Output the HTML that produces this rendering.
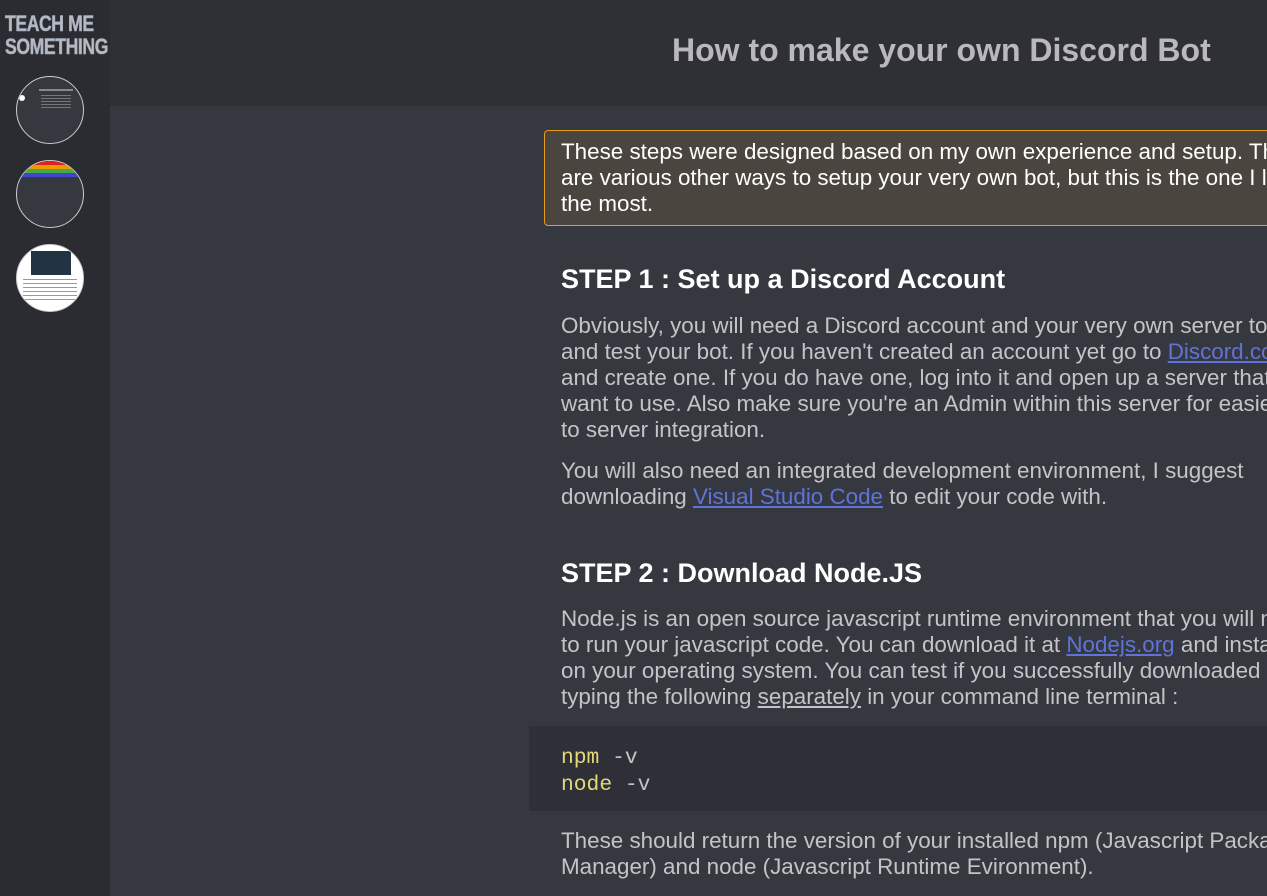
<!DOCTYPE html>
<html><head><meta charset="utf-8"><style>
html,body{margin:0;padding:0;width:1267px;height:896px;overflow:hidden;background:#36383f;font-family:"Liberation Sans",Arial,sans-serif}
.wrap{position:relative;width:1267px;height:896px;overflow:hidden}
.side{position:absolute;left:0;top:0;width:110px;height:896px;background:#2b2c31}
.logo{position:absolute;left:5px;top:12px;font-family:"Liberation Sans",sans-serif;font-weight:900;font-size:22px;line-height:23px;color:#b9b9c0;letter-spacing:-0.5px;transform:scaleX(0.8);transform-origin:left;-webkit-text-stroke:0.6px #9ab;}
.circ{position:absolute;left:16px;width:66px;height:66px;border:1px solid #ccc;border-radius:50%;overflow:hidden;background:#36383f}
.header{position:absolute;left:110px;top:0;width:1157px;height:106px;background:#2f3036}
.header h1{position:absolute;left:562px;top:32px;margin:0;font-size:32px;font-weight:bold;color:#b9b9bd;white-space:nowrap}
.note{position:absolute;left:544px;top:130px;width:760px;height:96px;background:#4a453e;border:1px solid #e69d1e;border-radius:4px;box-sizing:border-box;padding:8px 16px;color:#fff;font-size:22.4px;line-height:26px;white-space:nowrap}
h2{position:absolute;left:561px;margin:0;font-size:27px;color:#fff;white-space:nowrap}
p{position:absolute;left:561px;margin:0;width:780px;color:#c4c4c8;font-size:22.4px;line-height:26px;white-space:nowrap}
a{color:#5f73d8}
.code{position:absolute;left:529px;top:726px;width:760px;height:85px;background:#2f3037;font-family:"Liberation Mono",monospace;font-size:21.3px;line-height:27px;padding:19px 32px 0;box-sizing:border-box;color:#c4c4c8}
.k{color:#e2d97a}
</style></head><body><div class="wrap">
<div class="side">
<div class="logo">TEACH ME<br>SOMETHING</div>
<div class="circ" style="top:76px"><div style="position:absolute;left:22px;top:12px;width:34px;height:2px;background:#888"></div><div style="position:absolute;left:24px;top:18px;width:30px;height:14px;background:repeating-linear-gradient(#777 0 1px,transparent 1px 3px)"></div><div style="position:absolute;left:2px;top:18px;width:6px;height:6px;border-radius:50%;background:#fff"></div></div>
<div class="circ" style="top:160px"><div style="height:4px;background:#d22"></div><div style="height:4px;background:#e90"></div><div style="height:4px;background:#4a4"></div><div style="height:4px;background:#44c"></div></div>
<div class="circ" style="top:244px;background:#fff"><div style="position:absolute;left:14px;top:6px;width:40px;height:24px;background:#234"></div><div style="position:absolute;left:6px;top:34px;width:54px;height:24px;background:repeating-linear-gradient(#999 0 1px,transparent 1px 4px)"></div></div>
</div>
<div class="header"><h1>How to make your own Discord Bot</h1></div>
<div class="note">These steps were designed based on my own experience and setup. There<br>are various other ways to setup your very own bot, but this is the one I like<br>the most.</div>
<h2 style="top:264px">STEP 1 : Set up a Discord Account</h2>
<p style="top:313px">Obviously, you will need a Discord account and your very own server to host<br>and test your bot. If you haven't created an account yet go to <a href="#">Discord.com</a><br>and create one. If you do have one, log into it and open up a server that you<br>want to use. Also make sure you're an Admin within this server for easier access<br>to server integration.</p>
<p style="top:458px">You will also need an integrated development environment, I suggest<br>downloading <a href="#">Visual Studio Code</a> to edit your code with.</p>
<h2 style="top:558px">STEP 2 : Download Node.JS</h2>
<p style="top:606px">Node.js is an open source javascript runtime environment that you will need<br>to run your javascript code. You can download it at <a href="#">Nodejs.org</a> and install it<br>on your operating system. You can test if you successfully downloaded it by<br>typing the following <u>separately</u> in your command line terminal :</p>
<div class="code"><span class="k">npm</span> -v<br><span class="k">node</span> -v</div>
<p style="top:828px">These should return the version of your installed npm (Javascript Package<br>Manager) and node (Javascript Runtime Evironment).</p>
</div></body></html>
